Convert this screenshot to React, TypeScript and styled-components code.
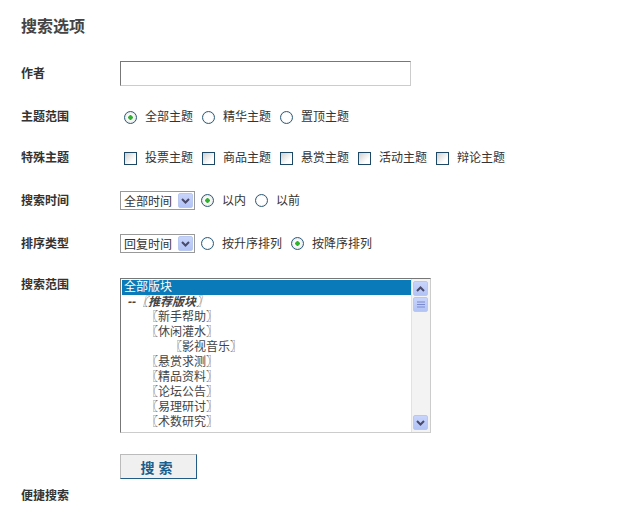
import React from 'react';
import styled, { createGlobalStyle } from 'styled-components';

const Global = createGlobalStyle`
  body { margin: 0; background: #fff; font-family: "Liberation Sans", "Noto Sans CJK SC", sans-serif; font-size: 12px; color: #333; }
`;

const Page = styled.div`
  padding: 17px 0 0 21px;
  width: 612px;
`;

const Title = styled.h2`
  margin: 0;
  font-size: 16px;
  font-weight: bold;
  color: #444;
  line-height: 20px;
`;

const Row = styled.div<{ top: number; h: number }>`
  display: flex;
  align-items: center;
  margin-top: ${(p) => p.top}px;
  height: ${(p) => p.h}px;
`;

const Label = styled.div<{ start?: boolean }>`
  width: 99px;
  flex-shrink: 0;
  font-weight: bold;
  color: #333;
  align-self: ${(p) => (p.start ? 'flex-start' : 'center')};
  line-height: 14px;
`;

const Controls = styled.div`
  display: flex;
  align-items: center;
  height: 100%;
`;

const TextInput = styled.div`
  width: 289px;
  height: 23px;
  border: 1px solid #ccc;
  border-top-color: #777;
  border-left-color: #777;
`;

const RadioDot = styled.span<{ on?: boolean }>`
  width: 11px;
  height: 11px;
  border-radius: 50%;
  border: 1px solid #2b5a7a;
  background: radial-gradient(circle, ${(p) => (p.on ? '#2db32d 0 2px, #fff 2.5px' : '#fff 0, #fff 4px')}, #d8d8d8 100%);
  margin: 0 8px 0 4px;
  flex-shrink: 0;
`;

const Box = styled.span`
  width: 11px;
  height: 11px;
  border: 1px solid #1e4966;
  background: linear-gradient(135deg, #d0d0d0, #fff 70%);
  margin: 0 8px 0 4px;
  flex-shrink: 0;
`;

const Opt = styled.span`
  margin-right: 5px;
  color: #333;
  line-height: 14px;
`;

const Select = styled.div<{ w: number }>`
  width: ${(p) => p.w}px;
  height: 19px;
  border: 1px solid #999;
  display: flex;
  align-items: center;
  justify-content: space-between;
  padding-left: 3px;
  margin-right: 2px;
  box-sizing: border-box;
`;

const Arrow = styled.span<{ small?: boolean }>`
  width: 15px;
  height: 15px;
  margin-right: 1px;
  background: linear-gradient(#c8d4fb, #b2c3f5);
  border: 1px solid #b9c8ef;
  border-radius: 2px;
  display: flex;
  align-items: center;
  justify-content: center;
  box-sizing: border-box;
`;

const ListBox = styled.div`
  width: 311px;
  height: 155px;
  border: 1px solid #777;
  border-right-color: #ccc;
  border-bottom-color: #ccc;
  display: flex;
  box-sizing: border-box;
`;

const Items = styled.div`
  flex: 1;
  padding: 1px 0 0 1px;
  overflow: hidden;
`;

const Item = styled.div<{ indent: number; sel?: boolean; em?: boolean }>`
  height: 15px;
  line-height: 15px;
  padding-left: ${(p) => p.indent}px;
  background: ${(p) => (p.sel ? '#0a7ab9' : 'transparent')};
  color: ${(p) => (p.sel ? '#fff' : '#444')};
  font-style: ${(p) => (p.em ? 'italic' : 'normal')};
  font-weight: ${(p) => (p.em ? 'bold' : 'normal')};
  white-space: nowrap;
`;

const Scroll = styled.div`
  width: 16px;
  background: #f3f3f3;
  border-left: 1px solid #e2e2e2;
  display: flex;
  flex-direction: column;
  justify-content: space-between;
  padding: 2px 1px;
`;

const Thumb = styled(Arrow)`
  margin-top: 1px;
  flex-direction: column;
  gap: 1px;
`;

const Track = styled.div`
  flex: 1;
`;

const Button = styled.div`
  width: 77px;
  height: 25px;
  box-sizing: border-box;
  border: 1px solid #bbb;
  border-right-color: #1f5c86;
  border-bottom-color: #1f5c86;
  background: #f0f0f0;
  color: #185e8e;
  font-weight: bold;
  font-size: 14px;
  letter-spacing: 4px;
  display: flex;
  align-items: center;
  justify-content: center;
  margin-left: 99px;
`;

const Chevron = ({ up }: { up?: boolean }) => (
  <svg width="9" height="6" viewBox="0 0 9 6">
    <path d={up ? 'M1 5 L4.5 1.5 L8 5' : 'M1 1 L4.5 4.5 L8 1'} stroke="#4a4a6a" strokeWidth="2" fill="none" />
  </svg>
);

const forums: [string, number, boolean?, boolean?][] = [
  ['全部版块', 2, true],
  ['--〖推荐版块〗', 6, false, true],
  ['〖新手帮助〗', 24],
  ['〖休闲灌水〗', 24],
  ['〖影视音乐〗', 48],
  ['〖悬赏求测〗', 24],
  ['〖精品资料〗', 24],
  ['〖论坛公告〗', 24],
  ['〖易理研讨〗', 24],
  ['〖术数研究〗', 24],
];

export default function App() {
  return (
    <Page>
      <Global />
      <Title>搜索选项</Title>
      <Row top={24} h={25}>
        <Label>作者</Label>
        <TextInput />
      </Row>
      <Row top={22} h={18}>
        <Label>主题范围</Label>
        <Controls>
          <RadioDot on /><Opt>全部主题</Opt>
          <RadioDot /><Opt>精华主题</Opt>
          <RadioDot /><Opt>置顶主题</Opt>
        </Controls>
      </Row>
      <Row top={23} h={18}>
        <Label>特殊主题</Label>
        <Controls>
          <Box /><Opt>投票主题</Opt>
          <Box /><Opt>商品主题</Opt>
          <Box /><Opt>悬赏主题</Opt>
          <Box /><Opt>活动主题</Opt>
          <Box /><Opt>辩论主题</Opt>
        </Controls>
      </Row>
      <Row top={23} h={21}>
        <Label>搜索时间</Label>
        <Controls>
          <Select w={75}>全部时间<Arrow><Chevron /></Arrow></Select>
          <RadioDot on /><Opt>以内</Opt>
          <RadioDot /><Opt>以前</Opt>
        </Controls>
      </Row>
      <Row top={22} h={21}>
        <Label>排序类型</Label>
        <Controls>
          <Select w={75}>回复时间<Arrow><Chevron /></Arrow></Select>
          <RadioDot /><Opt>按升序排列</Opt>
          <RadioDot on /><Opt>按降序排列</Opt>
        </Controls>
      </Row>
      <Row top={24} h={155}>
        <Label start>搜索范围</Label>
        <ListBox>
          <Items>
            {forums.map(([t, i, s, e]) => (
              <Item key={t} indent={i} sel={s} em={e}>{t}</Item>
            ))}
          </Items>
          <Scroll>
            <Arrow><Chevron up /></Arrow>
            <Thumb>
              <svg width="8" height="7" viewBox="0 0 8 7"><path d="M0 1h8M0 3.5h8M0 6h8" stroke="#7a8ad0" /></svg>
            </Thumb>
            <Track />
            <Arrow><Chevron /></Arrow>
          </Scroll>
        </ListBox>
      </Row>
      <Row top={21} h={25}>
        <Button>搜索</Button>
      </Row>
      <Row top={8} h={18}>
        <Label>便捷搜索</Label>
      </Row>
    </Page>
  );
}
